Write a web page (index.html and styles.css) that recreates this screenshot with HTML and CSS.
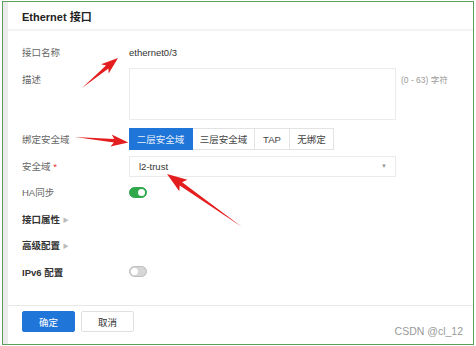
FILE: index.html
```html
<!DOCTYPE html>
<html lang="zh">
<head>
  <meta charset="UTF-8" />
  <title>Ethernet 接口</title>
  <link rel="stylesheet" href="styles.css">
</head>
<body>

  <div class="frame">
    <div class="strip"></div>
    <div class="panel">
      <div class="panel-header">Ethernet 接口</div>

      <div class="panel-body">
        <div class="row">
          <span class="label">接口名称</span>
          <span class="value">ethernet0/3</span>
        </div>

        <div class="row row-desc">
          <span class="label">描述</span>
          <div class="textarea"></div>
          <span class="hint">(0 - 63) 字符</span>
        </div>

        <div class="row row-seg">
          <span class="label">绑定安全域</span>
          <div class="segmented">
            <span class="seg active">二层安全域</span>
            <span class="seg">三层安全域</span>
            <span class="seg">TAP</span>
            <span class="seg">无绑定</span>
          </div>
        </div>

        <div class="row row-select">
          <span class="label">安全域 <em class="req">*</em></span>
          <div class="select">
            <span>l2-trust</span>
            <span class="caret">▼</span>
          </div>
        </div>

        <div class="row">
          <span class="label">HA同步</span>
          <span class="switch on"></span>
        </div>

        <div class="row tall">
          <span class="label strong">接口属性 <i class="tri">▶</i></span>
        </div>

        <div class="row">
          <span class="label strong">高级配置 <i class="tri">▶</i></span>
        </div>

        <div class="row tall">
          <span class="label strong">IPv6 配置</span>
          <span class="switch"></span>
        </div>
      </div>

      <div class="panel-footer">
        <button class="btn btn-primary">确定</button>
        <button class="btn">取消</button>
      </div>
    </div>

    <div class="watermark">CSDN @cl_12</div>

    <!-- annotation arrows -->
    <svg class="arrows" width="476" height="346" viewBox="0 0 476 346">
      <polygon points="82,88 108.4,68.4 108.7,73.5 118,58 101.1,64.3 106,65.6" />
      <polygon points="75,137 113.9,142.5 110.5,146.4 128.3,142.5 111.7,134.4 114.3,138.9" />
      <polygon points="242,227 182.1,182.2 187.4,179.8 167,174 179.3,191.3 179.7,185.4" />
    </svg>
  </div>

</body>
</html>
```

FILE: styles.css
```css
* {
  box-sizing: border-box;
  margin: 0;
  padding: 0;
}

body {
  font-family: "Liberation Sans", "Noto Sans CJK SC", sans-serif;
  font-size: 9.5px;
  color: #333;
  background: #fff;
}

.frame {
  position: relative;
  display: flex;
  width: 472px;
  height: 344px;
  margin: 1px 2px;
  border: 1px solid #5d9e5d;
}

.strip {
  width: 5px;
  background: #ebebeb;
}

.panel {
  flex: 1;
  display: flex;
  flex-direction: column;
}

.panel-header {
  height: 29px;
  padding-left: 14px;
  display: flex;
  align-items: center;
  font-size: 11px;
  font-weight: bold;
  color: #222;
  border-bottom: 2px solid #f3f3f3;
}

.panel-body {
  flex: 1;
  padding: 8px 0 0 14px;
}

.row {
  display: flex;
  align-items: center;
  height: 26px;
}

.row.tall {
  height: 27px;
}

.label {
  width: 107px;
  flex-shrink: 0;
  color: #666;
}

.label.strong {
  color: #333;
  font-weight: bold;
}

.req {
  color: #e33;
  font-style: normal;
}

.tri {
  font-style: normal;
  font-size: 6px;
  color: #bbb;
  vertical-align: 1px;
}

.value {
  color: #333;
}

.row-desc {
  height: auto;
  align-items: flex-start;
  margin-top: 3px;
}

.row-desc .label {
  padding-top: 4px;
}

.textarea {
  width: 267px;
  height: 52px;
  border: 1px solid #ebebeb;
}

.hint {
  margin-left: 5px;
  padding-top: 5px;
  font-size: 8.5px;
  color: #999;
}

.row-seg {
  height: 22px;
  margin-top: 8px;
}

.segmented {
  display: flex;
}

.seg {
  height: 22px;
  display: flex;
  align-items: center;
  justify-content: center;
  border: 1px solid #e3e3e3;
  border-left: none;
  color: #444;
}

.seg:nth-child(1) { width: 64px; }
.seg:nth-child(2) { width: 62px; }
.seg:nth-child(3) { width: 35px; }
.seg:nth-child(4) { width: 44px; }

.seg.active {
  background: #1f75d8;
  border-color: #1f75d8;
  color: #e6f0fb;
}

.row-select {
  height: 22px;
  margin: 5px 0 2px;
}

.select {
  width: 267px;
  height: 21px;
  border: 1px solid #ebebeb;
  display: flex;
  align-items: center;
  justify-content: space-between;
  padding: 0 8px 0 9px;
  color: #333;
}

.caret {
  font-size: 6px;
  color: #999;
}

.switch {
  position: relative;
  width: 18px;
  height: 11px;
  border-radius: 6px;
  background: #d6d6d6;
  border: 1px solid #bcbcbc;
}

.switch::after {
  content: "";
  position: absolute;
  top: 1px;
  left: 1px;
  width: 7px;
  height: 7px;
  border-radius: 50%;
  background: #fff;
}

.switch.on {
  background: #2ea84b;
  border-color: #2ea84b;
}

.switch.on::after {
  left: auto;
  right: 1px;
}

.panel-footer {
  height: 39px;
  border-top: 1px solid #e8e8e8;
  padding: 5px 0 0 14px;
  display: flex;
  align-items: flex-start;
  gap: 6px;
}

.btn {
  width: 53px;
  height: 21px;
  border: 1px solid #e0e0e0;
  border-radius: 2px;
  background: #fff;
  color: #333;
  font-family: inherit;
  font-size: 9.5px;
}

.btn-primary {
  background: #1f75d8;
  border-color: #1f75d8;
  color: #fff;
}

.watermark {
  position: absolute;
  right: 10px;
  bottom: 7px;
  font-size: 10.5px;
  color: #9a9a9a;
}

.arrows {
  position: absolute;
  top: -2px;
  left: -3px;
  pointer-events: none;
}

.arrows polygon {
  fill: #e41e1e;
}
```
